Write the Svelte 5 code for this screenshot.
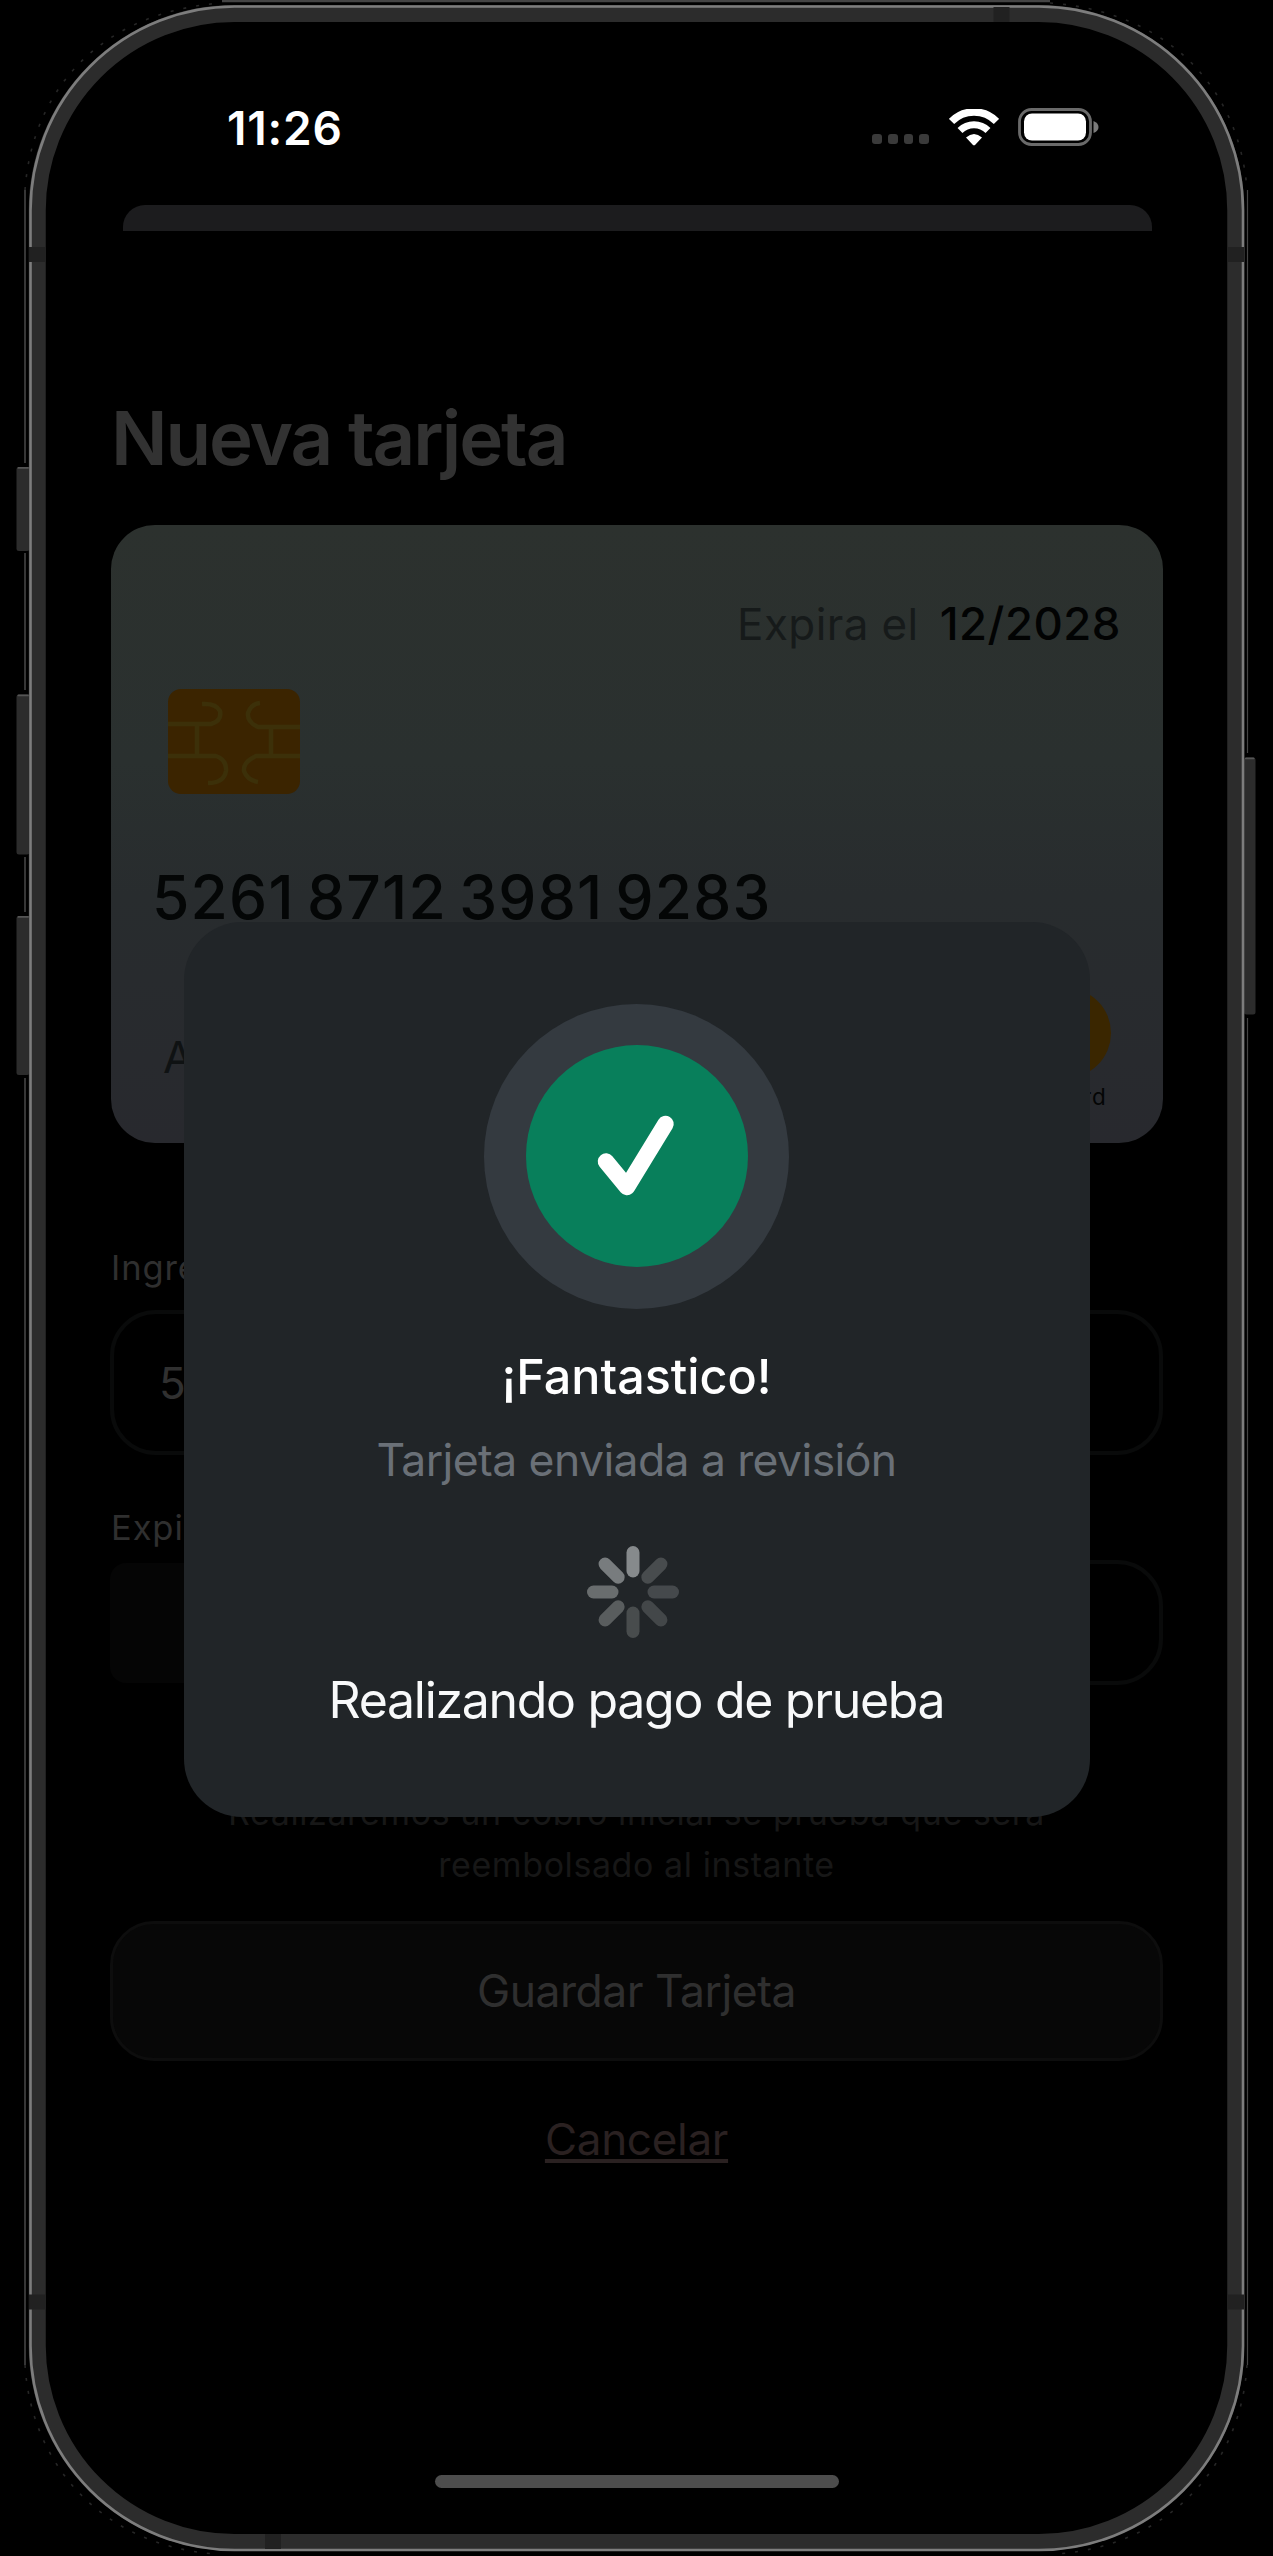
<script>
  const spokes = [
    { angle: 0, color: '#868a8c' },
    { angle: 45, color: '#484c4e' },
    { angle: 90, color: '#45494c' },
    { angle: 135, color: '#434749' },
    { angle: 180, color: '#484c4d' },
    { angle: 225, color: '#595d5e' },
    { angle: 270, color: '#696d6e' },
    { angle: 315, color: '#787c7e' },
  ];
  const sideButtons = [
    { x: 16.5, y: 467, h: 84 },
    { x: 16.5, y: 694.5, h: 160 },
    { x: 16.5, y: 916, h: 159 },
    { x: 1244, y: 757.5, h: 257 },
  ];
</script>

<div class="device">
  <svg class="chassis" viewBox="0 0 1273 2556" aria-hidden="true">
    <path d="M222 1H1050" stroke="#444" stroke-width="2.4" />
    <path d="M25 190V463M25 553V690M25 857V912M25 1078V2365" stroke="#444" stroke-width="1.6" />
    <path d="M1247.5 190V753M1247.5 1018V2365" stroke="#444" stroke-width="1.2" />
    <g fill="none" stroke="#262626" stroke-width="1.6" stroke-dasharray="3 10">
      <path d="M25 190C32 92 98 12 222 3M1050 3c122 9 190 89 197 187M25 2365c6 98 75 180 190 189M1247 2365c-6 98-75 180-190 189" />
    </g>
    {#each sideButtons as b}
      <rect x={b.x} y={b.y} width={b.x < 100 ? 13 : 11.5} height={b.h} rx="2.5" fill="#2c2c2c" />
      <rect x={b.x + 1} y={b.y} width={b.x < 100 ? 12 : 9.5} height="1.8" rx="0.9" fill="#555" />
    {/each}
    <rect x="37.25" y="13.5" width="1198.5" height="2529" rx="197" fill="#000" stroke="#2c2c2c" stroke-width="17" />
    <rect x="30.5" y="6.5" width="1212.5" height="2543.5" rx="204" fill="none" stroke="#7d7d7d" stroke-width="2.6" />
    <path d="M29 254.500H46M1227 254.500H1244M29 2302H46M1227 2302H1244" stroke="#212121" stroke-width="15" />
    <path d="M1001.500 7V22M273 2534V2549" stroke="#212121" stroke-width="16" />
  </svg>

  <div class="screen">
    <header class="status">
      <span class="time">11:26</span>
      <div class="indicators">
        <div class="signal"><i></i><i></i><i></i><i></i></div>
        <svg class="wifi" viewBox="0 0 50 37" aria-hidden="true">
          <path d="M2.500 12.500a31.500 31.500 0 0 1 45 0" fill="none" stroke="#fff" stroke-width="7.500" />
          <path d="M11 21.500a20 20 0 0 1 28 0" fill="none" stroke="#fff" stroke-width="7" />
          <path d="M17 28.500q8-7 16 0L26.500 35.500q-1.500 1.700-3 0z" fill="#fff" />
        </svg>
        <svg class="battery" viewBox="0 0 82 38" aria-hidden="true">
          <rect x="1.500" y="1.500" width="71" height="35" rx="12" fill="none" stroke="#6a6a6a" stroke-width="2.800" />
          <rect x="6" y="5.500" width="62" height="27" rx="8" fill="#fff" />
          <path d="M75.500 13q5 2 5 6t-5 6z" fill="#7a7a7a" />
        </svg>
      </div>
    </header>

    <div class="sheet-behind"></div>

    <main>
      <h1>Nueva tarjeta</h1>

      <section class="card">
        <p class="expiry"><span>Expira el</span><b>12/2028</b></p>
        <svg class="chip" viewBox="0 0 132 105" aria-hidden="true">
          <rect width="132" height="105" rx="13" fill="#3b2400" />
          <g fill="none" stroke="#3c3009" stroke-width="4.500">
            <path d="M0 35H43Q54 32 52 22Q48 14 34 15M29 35V67M0 67H48Q59 71 58 82Q56 94 40 94" />
            <path d="M132 38H90Q79 33 80 24Q83 15 92 14M103 38V67M132 67H88Q75 73 76 82Q79 91 90 93" />
          </g>
        </svg>
        <p class="number">5261 8712 3981 9283</p>
        <div class="card-foot">
          <span class="holder">A</span>
          <div class="brand">
            <svg viewBox="0 0 146 90" aria-hidden="true">
              <circle cx="45" cy="45" r="45" fill="#320208" />
              <circle cx="101" cy="45" r="45" fill="#3a2600" />
            </svg>
            <span>mastercard</span>
          </div>
        </div>
      </section>

      <p class="label first">Ingresa</p>
      <div class="field number-field">5</div>
      <p class="label second">Expira</p>
      <div class="split">
        <div class="filled"></div>
        <div class="field"></div>
      </div>

      <p class="notice">Realizaremos un cobro inicial se prueba que será<br />reembolsado al instante</p>
      <button class="save">Guardar Tarjeta</button>
      <a class="cancel" href="#cancelar">Cancelar</a>
    </main>
    <div class="home-bar"></div>
  </div>

  <div class="modal" role="dialog" aria-label="¡Fantastico!">
    <div class="badge">
      <svg viewBox="0 0 222 222" aria-hidden="true">
        <circle cx="111" cy="111" r="111" fill="#087f5b" />
        <path d="M80 116.500L101 142L139.500 79" fill="none" stroke="#fff" stroke-width="16.500" stroke-linecap="round" stroke-linejoin="round" />
      </svg>
    </div>
    <h2>¡Fantastico!</h2>
    <p class="sub">Tarjeta enviada a revisión</p>
    <svg class="spinner" viewBox="-46 -46 92 92" aria-hidden="true">
      {#each spokes as s}
        <rect x="-6.500" y="-46" width="13" height="31.500" rx="6.500" fill={s.color} transform="rotate({s.angle})" />
      {/each}
    </svg>
    <p class="progress">Realizando pago de prueba</p>
  </div>
</div>

<style>
  :global(body) { background: #000; }
  .device {
    position: relative;
    width: 1273px;
    height: 2556px;
    overflow: hidden;
    background: #000;
    font-family: Inter, "Liberation Sans", sans-serif;
  }
  .device :global(*) { box-sizing: border-box; }
  p, h1, h2 { margin: 0; font-weight: 400; }
  .chassis { position: absolute; inset: 0; width: 100%; height: 100%; }
  .screen { position: relative; display: flex; flex-direction: column; height: 100%; }

  .status {
    display: flex;
    align-items: center;
    justify-content: space-between;
    height: 205px;
    padding: 51px 173.500px 0 227px;
  }
  .time { color: #fff; font-size: 46px; font-weight: 600; letter-spacing: 0.800px; line-height: 60px; }
  .indicators { display: flex; align-items: center; }
  .signal { display: flex; gap: 6px; margin: 22px 20px 0 0; }
  .signal i { width: 9.700px; height: 10.500px; border-radius: 3px; background: #3a3a3a; }
  .wifi { width: 50px; height: 37px; margin: -2px 18.500px 0 0; }
  .battery { width: 82px; height: 38px; margin-top: -2px; }

  .sheet-behind {
    height: 26px;
    margin: 0 121px 0 122.500px;
    border-radius: 22px 22px 0 0;
    background: #1c1c1e;
  }

  main { display: flex; flex-direction: column; padding: 162px 110px 0 110px; }
  h1 { margin-left: 1px; color: #323232; font-size: 74.500px; font-weight: 600; letter-spacing: -2.100px; line-height: 90px; }

  .card {
    height: 618px;
    margin: 42px 0 0 1px;
    padding: 71px 42px 0 43px;
    border-radius: 44px;
    background: linear-gradient(180deg, #2c312e 0%, #2a302f 38%, #282c2e 60%, #28292e 100%);
  }
  .expiry { display: flex; justify-content: flex-end; gap: 21px; font-size: 44px; line-height: 56px; }
  .expiry span { color: #161a1a; letter-spacing: 0.400px; }
  .expiry b { color: #020303; font-size: 45.500px; font-weight: 500; letter-spacing: 0.500px; }
  .chip { display: block; width: 132px; height: 105px; margin: 37px 0 0 14px; }
  .number { margin-top: 67.500px; margin-left: -2px; color: #040606; font-size: 60.500px; font-weight: 500; letter-spacing: 1.200px; word-spacing: -5px; line-height: 70px; white-space: nowrap; }
  .card-foot { display: flex; justify-content: space-between; margin-top: 56.500px; padding: 0 10px 0 9px; }
  .holder { padding-top: 41px; color: #0f1213; font-size: 44px; line-height: 56px; }
  .brand { display: flex; flex-direction: column; align-items: flex-end; }
  .brand svg { display: block; width: 146px; height: 90px; }
  .brand span { margin: 8px 4px 0 0; color: #040505; font-size: 22.500px; font-weight: 400; letter-spacing: 1.200px; line-height: 22px; }

  .label { margin-left: 1px; color: #2f2f2f; font-size: 34.500px; letter-spacing: 0.900px; line-height: 40px; }
  .first { margin-top: 105px; }
  .second { margin-top: 53px; }
  .field { border: 4px solid #090a0a; border-radius: 46px; }
  .number-field { height: 145px; margin-top: 22px; padding: 0 45px; color: #303030; font-size: 44px; line-height: 138px; }
  .split { display: grid; grid-template-columns: 1fr 1fr; gap: 24px; height: 125px; margin-top: 12px; }
  .filled { margin: 3px 0 2px; border-radius: 16px; background: #050505; }

  .notice { margin-top: 102px; color: #171717; font-size: 34px; letter-spacing: 0.580px; line-height: 52px; text-align: center; white-space: nowrap; }
  .save {
    height: 140px;
    margin-top: 30px;
    padding: 0;
    border: 3px solid #0d0d0d;
    border-radius: 44px;
    background: #070707;
    color: #2f2f2f;
    font: 400 44.500px/56px Inter, "Liberation Sans", sans-serif;
    letter-spacing: -0.500px;
  }
  .cancel {
    align-self: center;
    margin-top: 50px;
    color: #2a2121;
    font-size: 44px;
    letter-spacing: -0.300px;
    line-height: 56px;
    text-decoration: underline;
    text-decoration-thickness: 4px;
    text-underline-offset: 4px;
  }
  .home-bar { width: 404px; height: 13px; margin: 308px auto 0; border-radius: 7px; background: #4d4d4d; }

  .modal {
    position: absolute;
    top: 922px;
    left: 183.500px;
    display: flex;
    flex-direction: column;
    align-items: center;
    width: 906px;
    height: 895px;
    padding-top: 81.500px;
    border-radius: 58px;
    background: #212528;
  }
  .badge { display: grid; place-items: center; width: 305px; height: 305px; border-radius: 50%; background: #343a40; }
  .badge svg { width: 222px; height: 222px; }
  h2 { margin-top: 38.500px; color: #fff; font-size: 48.500px; font-weight: 500; line-height: 60px; }
  .sub { margin-top: 25px; color: #6a7077; font-size: 44.500px; letter-spacing: -0.600px; line-height: 56px; }
  .spinner { width: 92px; height: 92px; margin: 58px 8px 0 0; }
  .progress { margin-top: 32px; color: #f8f9fa; font-size: 50px; letter-spacing: -1.300px; line-height: 60px; }
</style>
